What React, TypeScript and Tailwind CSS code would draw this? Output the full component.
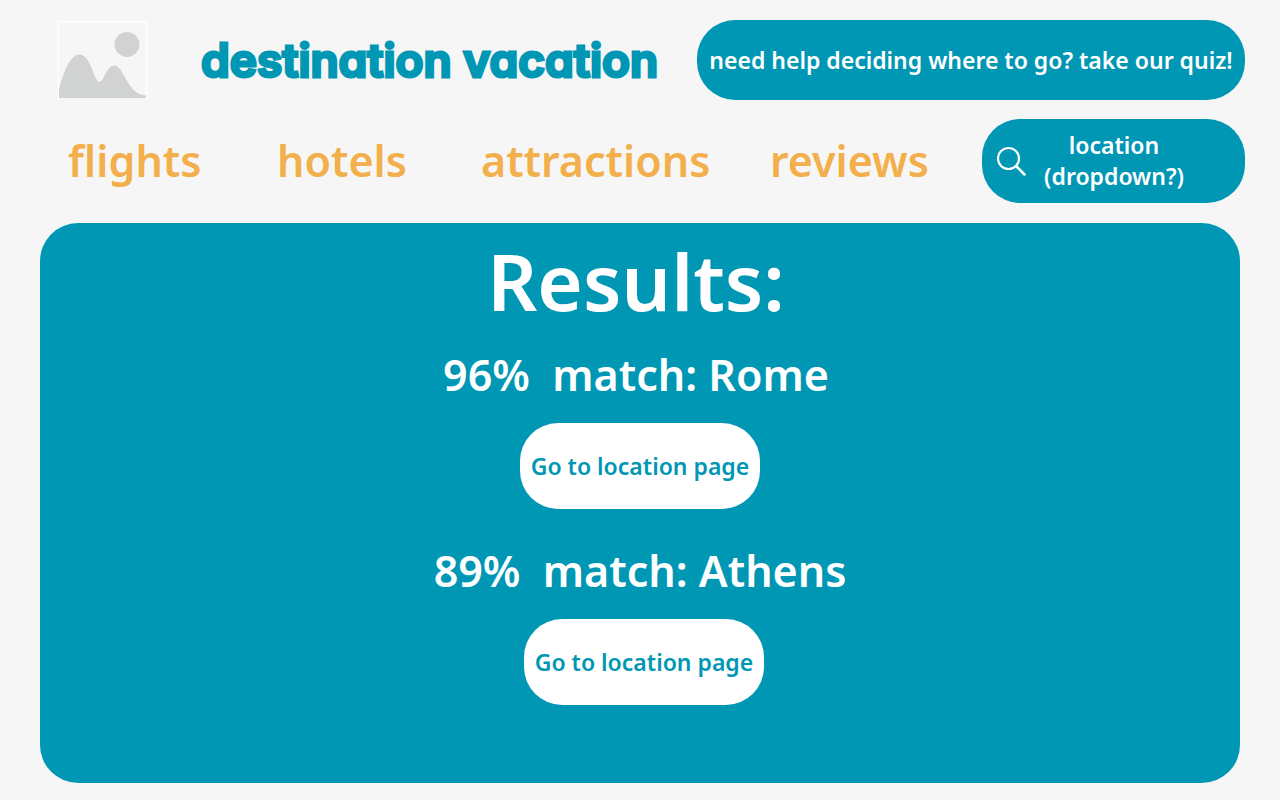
const matches = [
  { score: "96%", place: "Rome", shift: "" },
  { score: "89%", place: "Athens", shift: "pl-2" },
];

const links = [
  { label: "flights", cell: "w-[209px]" },
  { label: "hotels", cell: "w-[204px]" },
  { label: "attractions", cell: "w-[289px]" },
  { label: "reviews", cell: "w-[160px]" },
];

function Logo() {
  return (
    <svg className="h-[78px] w-[90px] shrink-0" viewBox="0 0 90 78" aria-hidden="true">
      <path d="M0.5 78V0.5H88.500" fill="none" stroke="#fff" />
      <path d="M88.500 0V78" fill="none" stroke="#fff" strokeWidth="2" />
      <circle cx="69" cy="23.500" r="12.500" fill="#d1d3d2" />
      <path
        d="M1 77V68C6 49 13 33.500 21.500 33.500C33 33.500 36 61 41.500 61C46 61 48 44.500 56.500 44.500C66 44.500 69 74 88 74.500V77Z"
        fill="#d1d3d2"
      />
    </svg>
  );
}

function SearchIcon() {
  return (
    <svg className="h-[30px] w-[30px] shrink-0" viewBox="0 0 30 30" fill="none" stroke="#fff" strokeWidth="2.200" aria-hidden="true">
      <circle cx="11.500" cy="12.500" r="10.500" />
      <path d="M19 20L27.500 28.500" strokeWidth="2.500" strokeLinecap="round" />
    </svg>
  );
}

export default function App() {
  return (
    <div className="min-h-screen bg-[#f6f6f6] pt-5 pb-4 font-['Noto_Sans',sans-serif] font-semibold">
      <header className="flex flex-col gap-[19px] pr-[35px]">
        <div className="flex items-center justify-between pl-[58px]">
          <div className="flex items-center gap-[53px]">
            <Logo />
            <h1 className="font-['Inter',sans-serif] text-[46px] leading-[60px] font-semibold whitespace-nowrap text-[#0097b5] [-webkit-text-stroke:3px_#0097b5] [font-feature-settings:'cv11'] [stroke-linejoin:round]">
              destination vacation
            </h1>
          </div>
          <button className="h-20 w-[548px] rounded-[38px] bg-[#0097b5] text-[23px] whitespace-nowrap text-white">
            need help deciding where to go? take our quiz!
          </button>
        </div>
        <div className="flex items-center justify-between pl-[68px]">
          <nav className="flex text-[43px] leading-[60px] text-[#f3af4b]">
            {links.map((link) => (
              <div key={link.label} className={link.cell}>
                <a href="#">{link.label}</a>
              </div>
            ))}
          </nav>
          <button
            aria-haspopup="listbox"
            className="flex h-[84px] w-[263px] items-center gap-4 rounded-[38px] bg-[#0097b5] pl-[15px] text-[23px] leading-[31px] text-white"
          >
            <SearchIcon />
            <span className="w-[142px] text-center">location (dropdown?)</span>
          </button>
        </div>
      </header>
      <main className="mx-10 mt-5 flex min-h-[560px] flex-col items-center rounded-[38px] bg-[#0097b5] pt-[13px] text-white">
        <h2 className="pr-2 text-[78px] leading-[90px]">Results:</h2>
        <div className="mt-[19px] flex flex-col items-center gap-8">
          {matches.map((match) => (
            <section key={match.place} className={match.shift}>
              <div className="flex flex-col items-center gap-[18px]">
                <h3 className="pr-2 text-[43px] leading-[60px] whitespace-pre">
                  {match.score}
                  {"  match: "}
                  {match.place}
                </h3>
                <button className="h-[86px] w-60 rounded-[38px] bg-white text-[23px] whitespace-nowrap text-[#0097b5]">
                  Go to location page
                </button>
              </div>
            </section>
          ))}
        </div>
      </main>
    </div>
  );
}
